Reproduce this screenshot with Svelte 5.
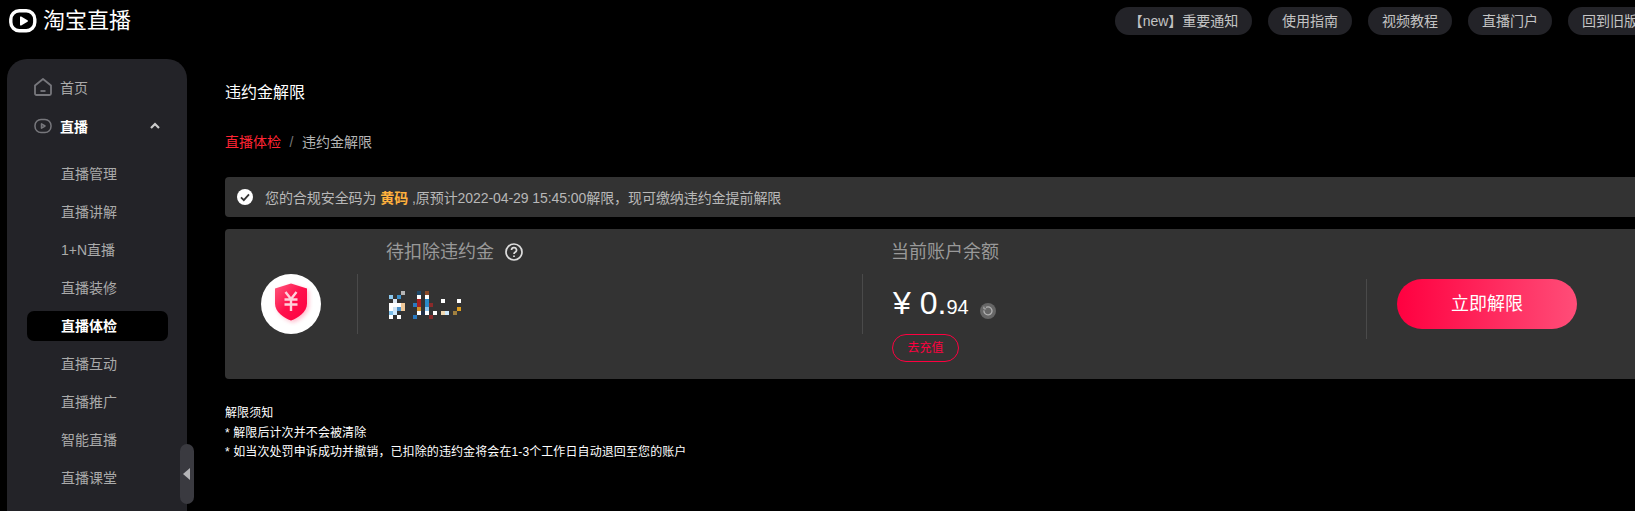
<script>
	const pills = ['【new】重要通知', '使用指南', '视频教程', '直播门户', '回到旧版'];
	const subMenu = ['直播管理', '直播讲解', '1+N直播', '直播装修', '直播体检', '直播互动', '直播推广', '智能直播', '直播课堂'];
	const activeItem = '直播体检';

	// blurred-out amount, [x, y, width, height, colour] in 1/3 px
	const mosaic = [
		[94, 34, 12, 12, '#b5b5b5'],
		[58, 46, 12, 12, '#8cc8ee'],
		[82, 46, 12, 12, '#3c8fc8'],
		[70, 58, 12, 12, '#dfeaf5'],
		[58, 70, 36, 12, '#ffffff'],
		[58, 82, 12, 12, '#ffffff'],
		[94, 70, 12, 24, '#f0c898'],
		[70, 82, 12, 12, '#cfe4f5'],
		[82, 82, 12, 12, '#4a90c8'],
		[58, 94, 12, 12, '#7bbde8'],
		[70, 94, 12, 12, '#cfeaff'],
		[58, 106, 12, 12, '#ffffff'],
		[82, 106, 12, 12, '#ffffff'],
		[142, 34, 12, 12, '#1f4a6b'],
		[166, 34, 12, 12, '#8a4a28'],
		[142, 46, 12, 12, '#ffffff'],
		[166, 46, 12, 12, '#ffffff'],
		[142, 58, 12, 24, '#a82020'],
		[166, 58, 12, 24, '#2a8ac8'],
		[130, 70, 12, 12, '#2a7ac0'],
		[178, 70, 12, 12, '#8a2a2a'],
		[142, 82, 12, 12, '#d0902a'],
		[166, 82, 12, 12, '#8ac4ee'],
		[142, 94, 12, 12, '#ffffff'],
		[166, 94, 12, 12, '#ffffff'],
		[154, 94, 12, 12, '#223048'],
		[190, 94, 12, 12, '#ffffff'],
		[130, 106, 12, 12, '#2a7ac0'],
		[178, 106, 12, 12, '#8a2a2a'],
		[214, 58, 12, 12, '#ffffff'],
		[262, 58, 12, 12, '#ffffff'],
		[214, 94, 12, 12, '#f0d8b0'],
		[226, 94, 12, 12, '#cfeaff'],
		[250, 94, 12, 12, '#a08040'],
		[262, 82, 12, 12, '#e0a020']
	];
</script>

<div class="page">
	<header class="topbar">
		<div class="logo">
			<svg width="28" height="24" viewBox="0 0 28 24" fill="none">
				<rect x="1.800" y="1.800" width="24" height="20" rx="8.500" stroke="#fff" stroke-width="3.400" />
				<path d="M11 8.200v7.600a.8.8 0 0 0 1.200.7l6.300-3.800a.8.8 0 0 0 0-1.400l-6.300-3.800a.8.8 0 0 0-1.200.7z" fill="#fff" />
			</svg>
			<span class="logo-text">淘宝直播</span>
		</div>
		<nav class="pills">
			{#each pills as pill}
				<span class="pill">{pill}</span>
			{/each}
		</nav>
	</header>

	<div class="body">
		<aside class="sidebar">
			<div class="menu-item">
				<svg width="18" height="18" viewBox="0 0 18 18" fill="none" stroke="#77777c" stroke-width="1.800">
					<path d="M1 7.500 9 1l8 6.500v8a1.500 1.500 0 0 1-1.500 1.500h-13A1.500 1.500 0 0 1 1 15.500z" stroke-linejoin="round" />
					<path d="M6.500 13h5" />
				</svg>
				<span>首页</span>
			</div>
			<div class="menu-item open">
				<svg width="18" height="18" viewBox="0 0 18 18" fill="none" stroke="#77777c" stroke-width="1.500">
					<rect x="1" y="2.500" width="16" height="13" rx="6" />
					<path d="M7.500 6.800v4.400L11 9z" stroke-linejoin="round" />
				</svg>
				<span>直播</span>
				<svg class="chevron" width="10" height="7" viewBox="0 0 10 7" fill="none" stroke="#ccc" stroke-width="2.200">
					<path d="M1 6l4-4 4 4" />
				</svg>
			</div>
			<ul class="submenu">
				{#each subMenu as item}
					<li class:active={item === activeItem}>{item}</li>
				{/each}
			</ul>
			<div class="collapse">
				<svg width="8" height="12" viewBox="0 0 8 12"><path d="M7 0v12L0 6z" fill="#b5b5b8" /></svg>
			</div>
		</aside>

		<main class="content">
			<h1>违约金解限</h1>
			<div class="breadcrumb">
				<span class="crumb-link">直播体检</span>
				<span class="crumb-sep">/</span>
				<span>违约金解限</span>
			</div>

			<div class="alert">
				<svg width="16" height="16" viewBox="0 0 16 16">
					<circle cx="8" cy="8" r="8" fill="#fff" />
					<path d="M4 8.300l2.800 2.800L12 5.300" fill="none" stroke="#333" stroke-width="1.800" />
				</svg>
				<span>您的合规安全码为 <b>黄码</b> ,原预计2022-04-29 15:45:00解限，现可缴纳违约金提前解限</span>
			</div>

			<section class="card">
				<div class="badge-col">
					<div class="badge">
						<svg width="40" height="44" viewBox="0 0 40 44">
							<defs>
								<linearGradient id="shield" x1="0" y1="0" x2="1" y2="1">
									<stop offset="0" stop-color="#ff5a7e" />
									<stop offset="0.5" stop-color="#ff0f4b" />
									<stop offset="1" stop-color="#ff0040" />
								</linearGradient>
								<filter id="soft" x="-30%" y="-30%" width="160%" height="160%">
									<feGaussianBlur stdDeviation="2" />
								</filter>
							</defs>
							<path d="M34 6.500 18 1.500 2 6.500v15C2 30 11 36 18 38.500c7-2.500 16-8.500 16-17z" fill="#ff8aa6" transform="translate(2 2)" opacity="0.55" filter="url(#soft)" />
							<path d="M34 6.500 18 1.500 2 6.500v15C2 30 11 36 18 38.500c7-2.500 16-8.500 16-17z" fill="url(#shield)" />
							<path d="M12.500 10l5.500 7 5.500-7M18 17v12M11.500 17.500h13M11.500 22.500h13" fill="none" stroke="#ffd0da" stroke-width="2.400" />
						</svg>
					</div>
				</div>
				<div class="col">
					<div class="col-title">
						待扣除违约金
						<svg width="18" height="18" viewBox="0 0 18 18" fill="none" stroke="#ddd" stroke-width="1.700">
							<circle cx="9" cy="9" r="8" />
							<path d="M6.500 7a2.500 2.500 0 1 1 3.600 2.300c-.8.400-1.100.9-1.100 1.700" />
							<path d="M9 12.500v1.500" />
						</svg>
					</div>
					<div class="col-body">
						<svg class="mosaic" width="110" height="50" viewBox="0 0 330 150" shape-rendering="crispEdges">
							{#each mosaic as [x, y, w, h, fill]}
								<rect {x} {y} width={w} height={h} {fill} />
							{/each}
						</svg>
					</div>
				</div>
				<div class="col narrow">
					<div class="col-title">当前账户余额</div>
					<div class="col-body">
						<div class="amount">
							<span class="big">¥ 0.</span><span class="small">94</span>
							<span class="refresh">
								<svg width="10" height="10" viewBox="0 0 10 10" fill="none" stroke="#b0b0b0" stroke-width="1.300">
									<path d="M3 1.400a4 4 0 1 1-2 3" />
									<path d="M.9 .6v2.300h2.300" stroke-width="1" />
								</svg>
							</span>
						</div>
						<span class="recharge">去充值</span>
					</div>
				</div>
				<div class="action-col">
					<span class="release">立即解限</span>
				</div>
			</section>

			<div class="notes">
				<p>解限须知</p>
				<p>* 解限后计次并不会被清除</p>
				<p>* 如当次处罚申诉成功并撤销，已扣除的违约金将会在1-3个工作日自动退回至您的账户</p>
			</div>
		</main>
	</div>
</div>

<style>
	:global(body) {
		background: #000;
		overflow: hidden;
	}

	.page {
		width: 1635px;
		height: 511px;
		overflow: hidden;
		background: #000;
		font-family: "Liberation Sans", "Noto Sans CJK SC", sans-serif;
		font-size: 14px;
		color: #b4b4b4;
	}

	.topbar {
		height: 59px;
		display: flex;
		align-items: flex-start;
		padding-left: 9px;
	}

	.logo {
		display: flex;
		align-items: center;
		gap: 6px;
		width: 1106px;
		flex: none;
		padding-top: 9px;
	}

	.logo-text {
		font-size: 22px;
		line-height: 24px;
		color: #fff;
	}

	.pills {
		display: flex;
		gap: 16px;
		padding-top: 7px;
		flex: none;
	}

	.pill {
		height: 28px;
		line-height: 28px;
		padding: 0 14px;
		border-radius: 14px;
		background: #232328;
		color: #c4c4c4;
		white-space: nowrap;
		flex: none;
	}

	.pill:first-child {
		width: 137px;
		padding: 0;
		text-align: center;
	}

	.body {
		display: flex;
		height: 452px;
	}

	.sidebar {
		position: relative;
		flex: none;
		width: 180px;
		margin-left: 7px;
		padding-top: 9px;
		box-sizing: border-box;
		background: #232328;
		border-radius: 20px 20px 0 0;
	}

	.menu-item {
		position: relative;
		display: flex;
		align-items: center;
		gap: 8px;
		height: 38px;
		padding-left: 27px;
		color: #aaa;
	}

	.menu-item.open {
		margin-top: 1px;
		color: #fff;
		font-weight: 700;
	}

	.chevron {
		position: absolute;
		left: 143px;
		top: 15px;
	}

	.submenu {
		list-style: none;
		margin: 14px 0 0;
		padding: 0;
	}

	.submenu li {
		height: 30px;
		line-height: 30px;
		margin: 0 19px 8px 20px;
		padding-left: 34px;
		border-radius: 7px;
		color: #aaa;
	}

	.submenu li.active {
		background: #000;
		color: #fff;
		font-weight: 700;
	}

	.collapse {
		position: absolute;
		left: 173px;
		top: 385px;
		width: 14px;
		height: 60px;
		border-radius: 7px;
		background: #3a3a40;
		display: flex;
		align-items: center;
		justify-content: center;
	}

	.content {
		flex: none;
		width: 1500px;
		padding-left: 38px;
	}

	h1 {
		margin: 0;
		padding-top: 22px;
		font-size: 16px;
		font-weight: 400;
		line-height: 24px;
		color: #fff;
	}

	.breadcrumb {
		margin-top: 25px;
		line-height: 24px;
		display: flex;
		gap: 8.500px;
		color: #b4b4b4;
	}

	.crumb-link {
		color: #ff2433;
	}

	.crumb-sep {
		color: #777;
	}

	.alert {
		margin-top: 23px;
		height: 40px;
		display: flex;
		align-items: center;
		gap: 12px;
		padding-left: 12px;
		background: #333;
		border-radius: 4px;
		color: #b8b8b8;
		font-size: 14px;
		letter-spacing: -0.07px;
	}

	.alert b {
		font-weight: 700;
		color: #ffb13d;
	}

	.card {
		margin-top: 12px;
		height: 150px;
		display: flex;
		align-items: flex-start;
		background: #333;
		border-radius: 4px;
	}

	.badge-col {
		flex: none;
		width: 132px;
		padding: 45px 0 0 36px;
		box-sizing: border-box;
	}

	.badge {
		width: 60px;
		height: 60px;
		border-radius: 50%;
		background: #fff;
		display: flex;
		align-items: center;
		justify-content: center;
		padding-left: 3px;
		box-sizing: border-box;
	}

	.col {
		flex: none;
		width: 505px;
		padding-top: 10px;
		box-sizing: border-box;
	}

	.col.narrow {
		width: 504px;
	}

	.col-title {
		height: 26px;
		line-height: 26px;
		padding-left: 29px;
		display: flex;
		align-items: center;
		gap: 11px;
		font-size: 18px;
		color: #999;
	}

	.col-body {
		position: relative;
		height: 60px;
		margin-top: 9px;
		border-left: 1px solid #4a4a4a;
		padding-left: 29px;
	}

	.mosaic {
		position: absolute;
		left: 12px;
		top: 6px;
	}

	.amount {
		display: flex;
		align-items: baseline;
		height: 44px;
		padding: 7px 0 0 1px;
		color: #fff;
		white-space: pre;
	}

	.big {
		font-size: 32px;
		line-height: 44px;
	}

	.small {
		font-size: 20px;
	}

	.refresh {
		width: 16px;
		height: 16px;
		margin-left: 11px;
		border-radius: 50%;
		background: #666;
		display: inline-flex;
		align-items: center;
		justify-content: center;
		align-self: center;
		position: relative;
		top: 8px;
	}

	.recharge {
		display: block;
		width: 67px;
		height: 28px;
		margin-top: 9px;
		box-sizing: border-box;
		border: 1px solid #ff0040;
		border-radius: 14px;
		font-size: 12px;
		line-height: 26px;
		text-align: center;
		color: #ff0040;
	}

	.action-col {
		flex: none;
		height: 60px;
		margin-top: 50px;
		padding-left: 30px;
		border-left: 1px solid #4a4a4a;
	}

	.release {
		display: block;
		width: 180px;
		height: 50px;
		border-radius: 25px;
		background: linear-gradient(90deg, #ff0040, #ff4d78);
		color: #fff;
		font-size: 18px;
		line-height: 50px;
		text-align: center;
	}

	.notes {
		margin-top: 25px;
		font-size: 12px;
		line-height: 19.5px;
		letter-spacing: 0.1px;
		color: #fff;
	}

	.notes p {
		margin: 0;
	}
</style>
